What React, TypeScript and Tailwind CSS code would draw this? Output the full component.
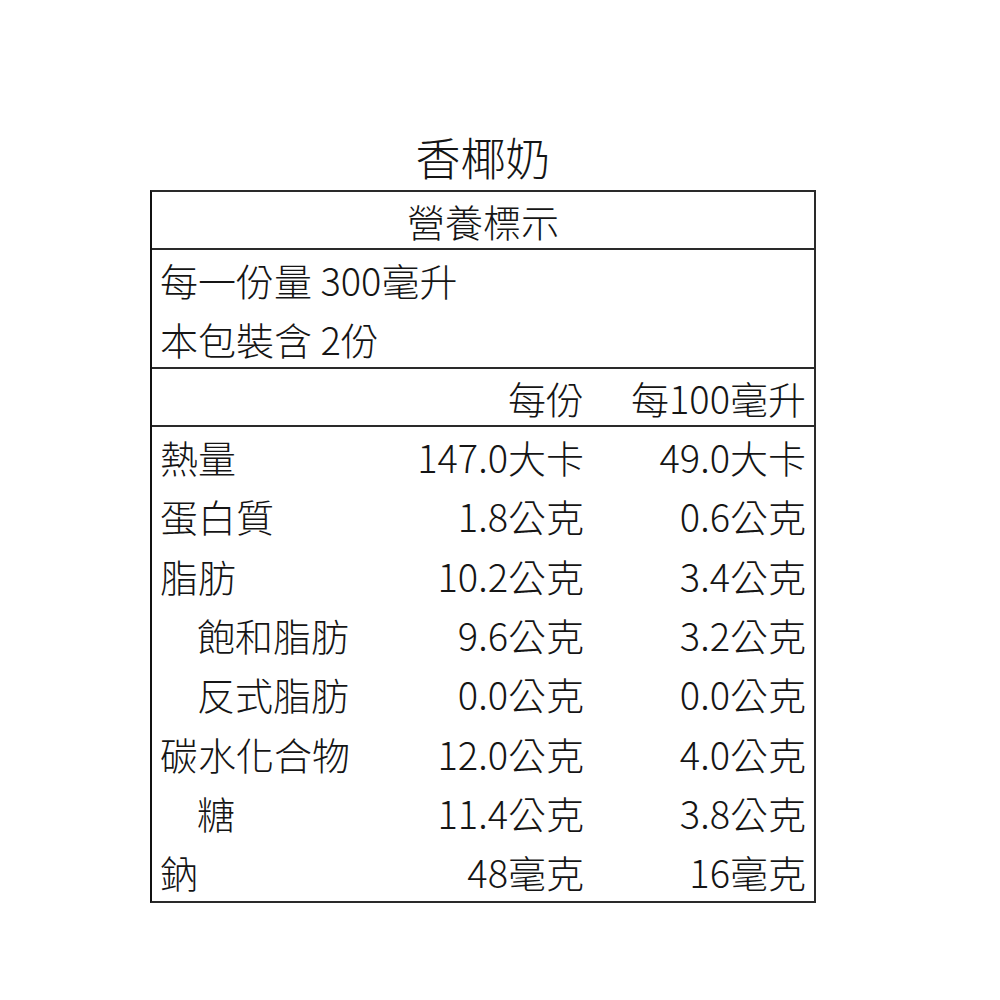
const rows: { name: string; per: string; per100: string; indent?: boolean }[] = [
  { name: "熱量", per: "147.0大卡", per100: "49.0大卡" },
  { name: "蛋白質", per: "1.8公克", per100: "0.6公克" },
  { name: "脂肪", per: "10.2公克", per100: "3.4公克" },
  { name: "飽和脂肪", per: "9.6公克", per100: "3.2公克", indent: true },
  { name: "反式脂肪", per: "0.0公克", per100: "0.0公克", indent: true },
  { name: "碳水化合物", per: "12.0公克", per100: "4.0公克" },
  { name: "糖", per: "11.4公克", per100: "3.8公克", indent: true },
  { name: "鈉", per: "48毫克", per100: "16毫克" },
];

export default function App() {
  return (
    <div
      className="w-[1000px] h-[1000px] bg-white text-[#151515] font-light"
      style={{ fontFamily: '"Noto Sans CJK TC", "Noto Sans", sans-serif' }}
    >
      <div className="pt-[127px] pl-[150px]">
        <div className="w-[666px] text-center text-[45px] leading-[60px] h-[63px]">
          香椰奶
        </div>

        <div className="w-[666px] border-2 border-[#2a2a2a] border-l-[#111]">
          {/* 標題 */}
          <div className="h-[58px] flex items-center justify-center text-[38px] border-b-2 border-[#2a2a2a]">
            營養標示
          </div>

          {/* 份量 */}
          <div className="border-b-2 border-[#2a2a2a] pl-[8px]">
            <div className="h-[59px] flex items-center text-[38px]">每一份量 300毫升</div>
            <div className="h-[58px] flex items-center text-[38px]">本包裝含 2份</div>
          </div>

          {/* 欄位標題 */}
          <div className="h-[58px] flex items-center text-[38px] border-b-2 border-[#2a2a2a]">
            <div className="flex-1" />
            <div className="w-[230px] text-right">每份</div>
            <div className="w-[230px] pr-[8px] text-right">每100毫升</div>
          </div>

          {/* 營養素 */}
          {rows.map((r) => (
            <div key={r.name} className="h-[59.3px] flex items-center text-[38px] pl-[8px]">
              <div className={"flex-1 " + (r.indent ? "pl-[37px]" : "")}>{r.name}</div>
              <div className="w-[230px] text-right">{r.per}</div>
              <div className="w-[230px] pr-[8px] text-right">{r.per100}</div>
            </div>
          ))}
        </div>
      </div>
    </div>
  );
}
